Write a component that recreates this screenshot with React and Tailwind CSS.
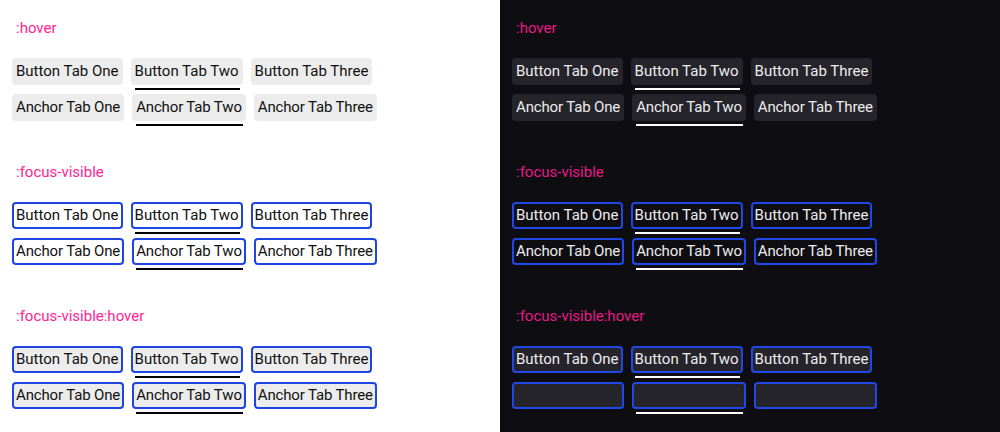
import React from 'react';

const sections = [
  { title: ':hover', hover: true, focus: false },
  { title: ':focus-visible', hover: false, focus: true },
  { title: ':focus-visible:hover', hover: true, focus: true },
];

const rows = [
  ['Button Tab One', 'Button Tab Two', 'Button Tab Three'],
  ['Anchor Tab One', 'Anchor Tab Two', 'Anchor Tab Three'],
];

const Tab = ({ label, selected, hover, focus, dark, hidden, tight }) => {
  let box = 'h-[27px] px-1 rounded-[4px] flex items-center whitespace-nowrap leading-none ';
  if (tight) box += 'tracking-[-0.15px] ';
  if (hover) box += dark ? 'bg-[#25242a] ' : 'bg-[#ececec] ';
  if (focus) box += dark ? 'shadow-[inset_0_0_0_2px_#2148e6] ' : 'shadow-[inset_0_0_0_2px_#1f45e0] ';
  box += hidden ? 'text-transparent' : dark ? 'text-[#ececee]' : 'text-[#111111]';

  return (
    <div className="flex flex-col">
      <div className={box}>{label}</div>
      {selected && (
        <div className={`mt-[3px] ml-1 mr-[3px] h-[2px] ${dark ? 'bg-white' : 'bg-black'}`} />
      )}
    </div>
  );
};

const Panel = ({ dark }) => (
  <div className={`w-1/2 h-[432px] pl-3 ${dark ? 'bg-[#0e0d12]' : 'bg-white'}`}>
    {sections.map((s, si) => (
      <div key={s.title} className="h-[144px] pt-4">
        <div className={`pl-1 h-6 leading-6 ${dark ? 'text-[#e8198a]' : 'text-[#ff2592]'}`}>{s.title}</div>
        <div className="mt-[18px] flex flex-col gap-1">
          {rows.map((row, ri) => (
            <div key={ri} className="flex items-start gap-2">
              {row.map((label, ti) => (
                <Tab
                  key={label}
                  label={label}
                  selected={ti === 1}
                  hover={s.hover}
                  focus={s.focus}
                  dark={dark}
                  tight={ri === 1}
                  hidden={dark && si === 2 && ri === 1}
                />
              ))}
            </div>
          ))}
        </div>
      </div>
    ))}
  </div>
);

export default function App() {
  return (
    <div
      className="flex w-[1000px] h-[432px] overflow-hidden text-[15px]"
      style={{ fontFamily: 'Roboto, "Liberation Sans", sans-serif' }}
    >
      <Panel dark={false} />
      <Panel dark />
    </div>
  );
}
